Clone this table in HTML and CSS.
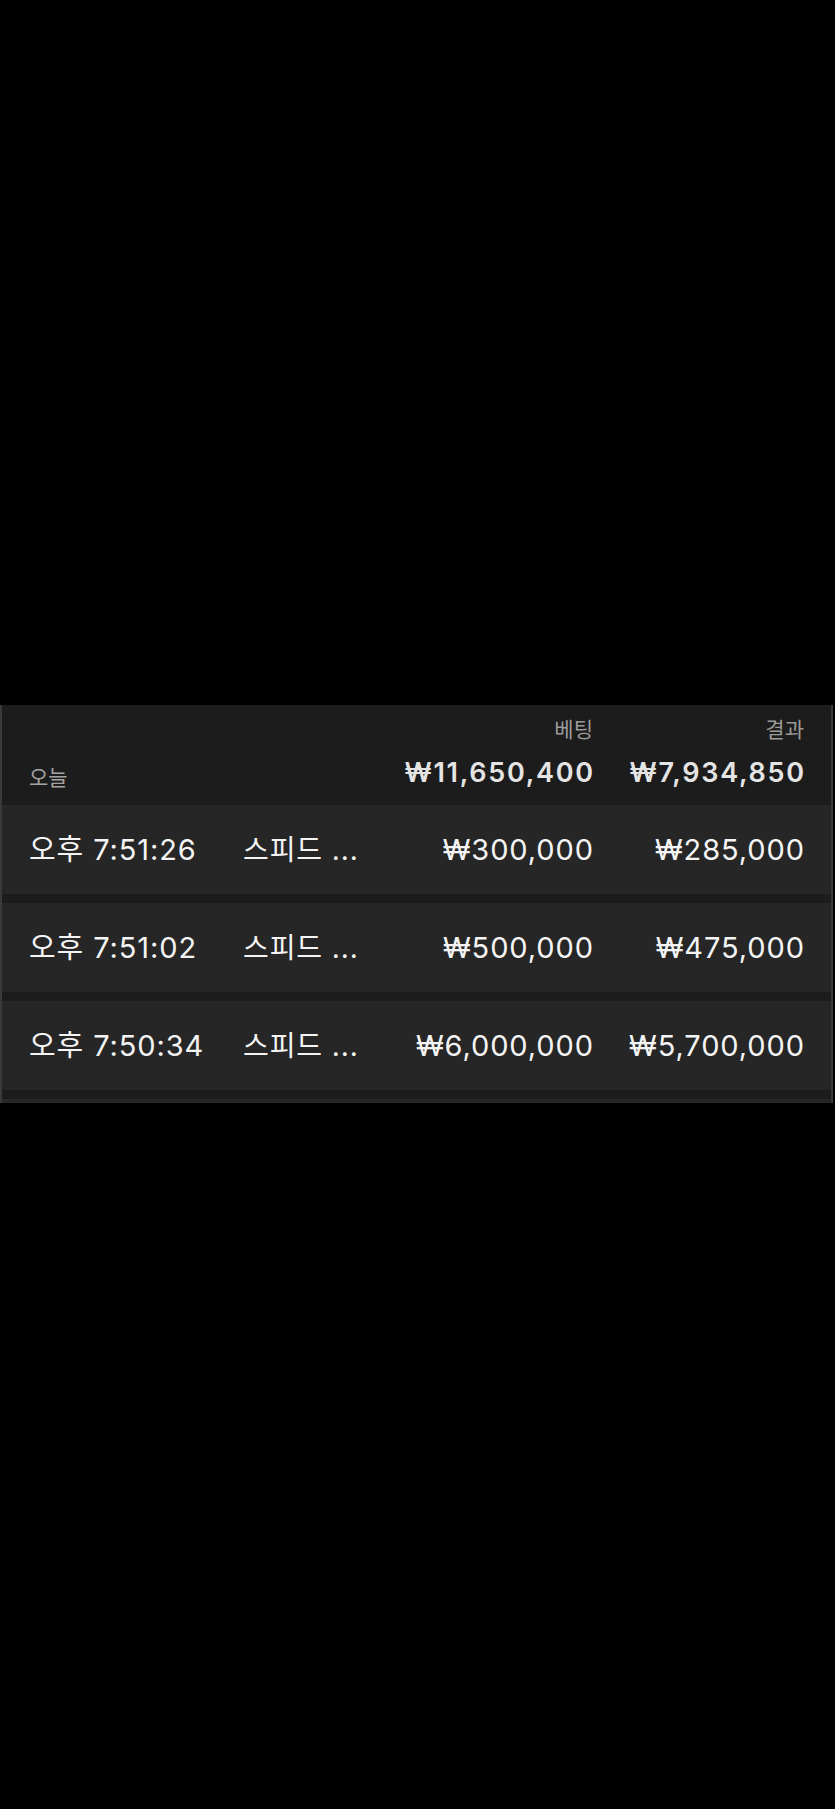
FILE: index.html
```html
<!DOCTYPE html>
<html lang="ko">
<head>
<meta charset="utf-8">
<link rel="stylesheet" href="styles.css">
</head>
<body>
<div class="screen">
  <div class="panel">
    <div class="head">
      <div class="lbl col-bet">베팅</div>
      <div class="lbl col-res">결과</div>
      <div class="today">오늘</div>
      <div class="total col-bet">₩11,650,400</div>
      <div class="total col-res">₩7,934,850</div>
    </div>
    <div class="row">
      <div class="time">오후 7:51:26</div>
      <div class="game">스피드 ...</div>
      <div class="amt">₩300,000</div>
      <div class="amt">₩285,000</div>
    </div>
    <div class="row">
      <div class="time">오후 7:51:02</div>
      <div class="game">스피드 ...</div>
      <div class="amt">₩500,000</div>
      <div class="amt">₩475,000</div>
    </div>
    <div class="row">
      <div class="time">오후 7:50:34</div>
      <div class="game">스피드 ...</div>
      <div class="amt">₩6,000,000</div>
      <div class="amt">₩5,700,000</div>
    </div>
    <div class="row peek"></div>
  </div>
</div>
</body>
</html>
```
FILE: styles.css
```css
html, body {
  margin: 0;
  padding: 0;
  background: #000;
}
body {
  font-family: Inter, "Noto Sans CJK KR", sans-serif;
  width: 835px;
  height: 1809px;
  overflow: hidden;
}
.screen {
  padding-top: 705px;
}
.panel {
  width: 829px;
  height: 398px;
  overflow: hidden;
  background: #1c1c1c;
  border-left: 2px solid #3a3a3a;
  border-right: 2px solid #3a3a3a;
  display: flex;
  flex-direction: column;
  gap: 9px;
}
.head, .row {
  display: grid;
  grid-template-columns: 214px 1fr 219px 211px;
  padding: 0 27px 0 27px;
}
.head {
  height: 100px;
  box-sizing: border-box;
  padding-top: 13px;
  padding-bottom: 16px;
  grid-template-rows: 24px 32px;
  row-gap: 15px;
  margin-bottom: -9px;
}
.lbl {
  grid-row: 1;
  font-size: 21px;
  line-height: 24px;
  color: #9b9b9b;
  text-align: right;
}
.col-bet { grid-column: 3; }
.col-res { grid-column: 4; }
.today {
  grid-row: 2;
  grid-column: 1;
  align-self: end;
  font-size: 21px;
  line-height: 24px;
  color: #a3a3a3;
  margin-bottom: -1px;
}
.total {
  grid-row: 2;
  font-size: 27px;
  line-height: 32px;
  font-weight: 600;
  letter-spacing: 1.7px;
  color: #e4e4e4;
  text-align: right;
  margin-right: -1.7px;
}
.row {
  height: 89px;
  box-sizing: border-box;
  padding-top: 1px;
  flex: none;
  background: #262626;
  align-items: center;
  font-size: 29px;
  line-height: 36px;
  letter-spacing: 0.9px;
  color: #f4f4f4;
}
.row.peek {
  height: 10px;
}
.time, .game {
  white-space: nowrap;
}
.game {
  font-size: 28px;
}
.amt {
  text-align: right;
  white-space: nowrap;
  margin-right: -0.9px;
}
```
